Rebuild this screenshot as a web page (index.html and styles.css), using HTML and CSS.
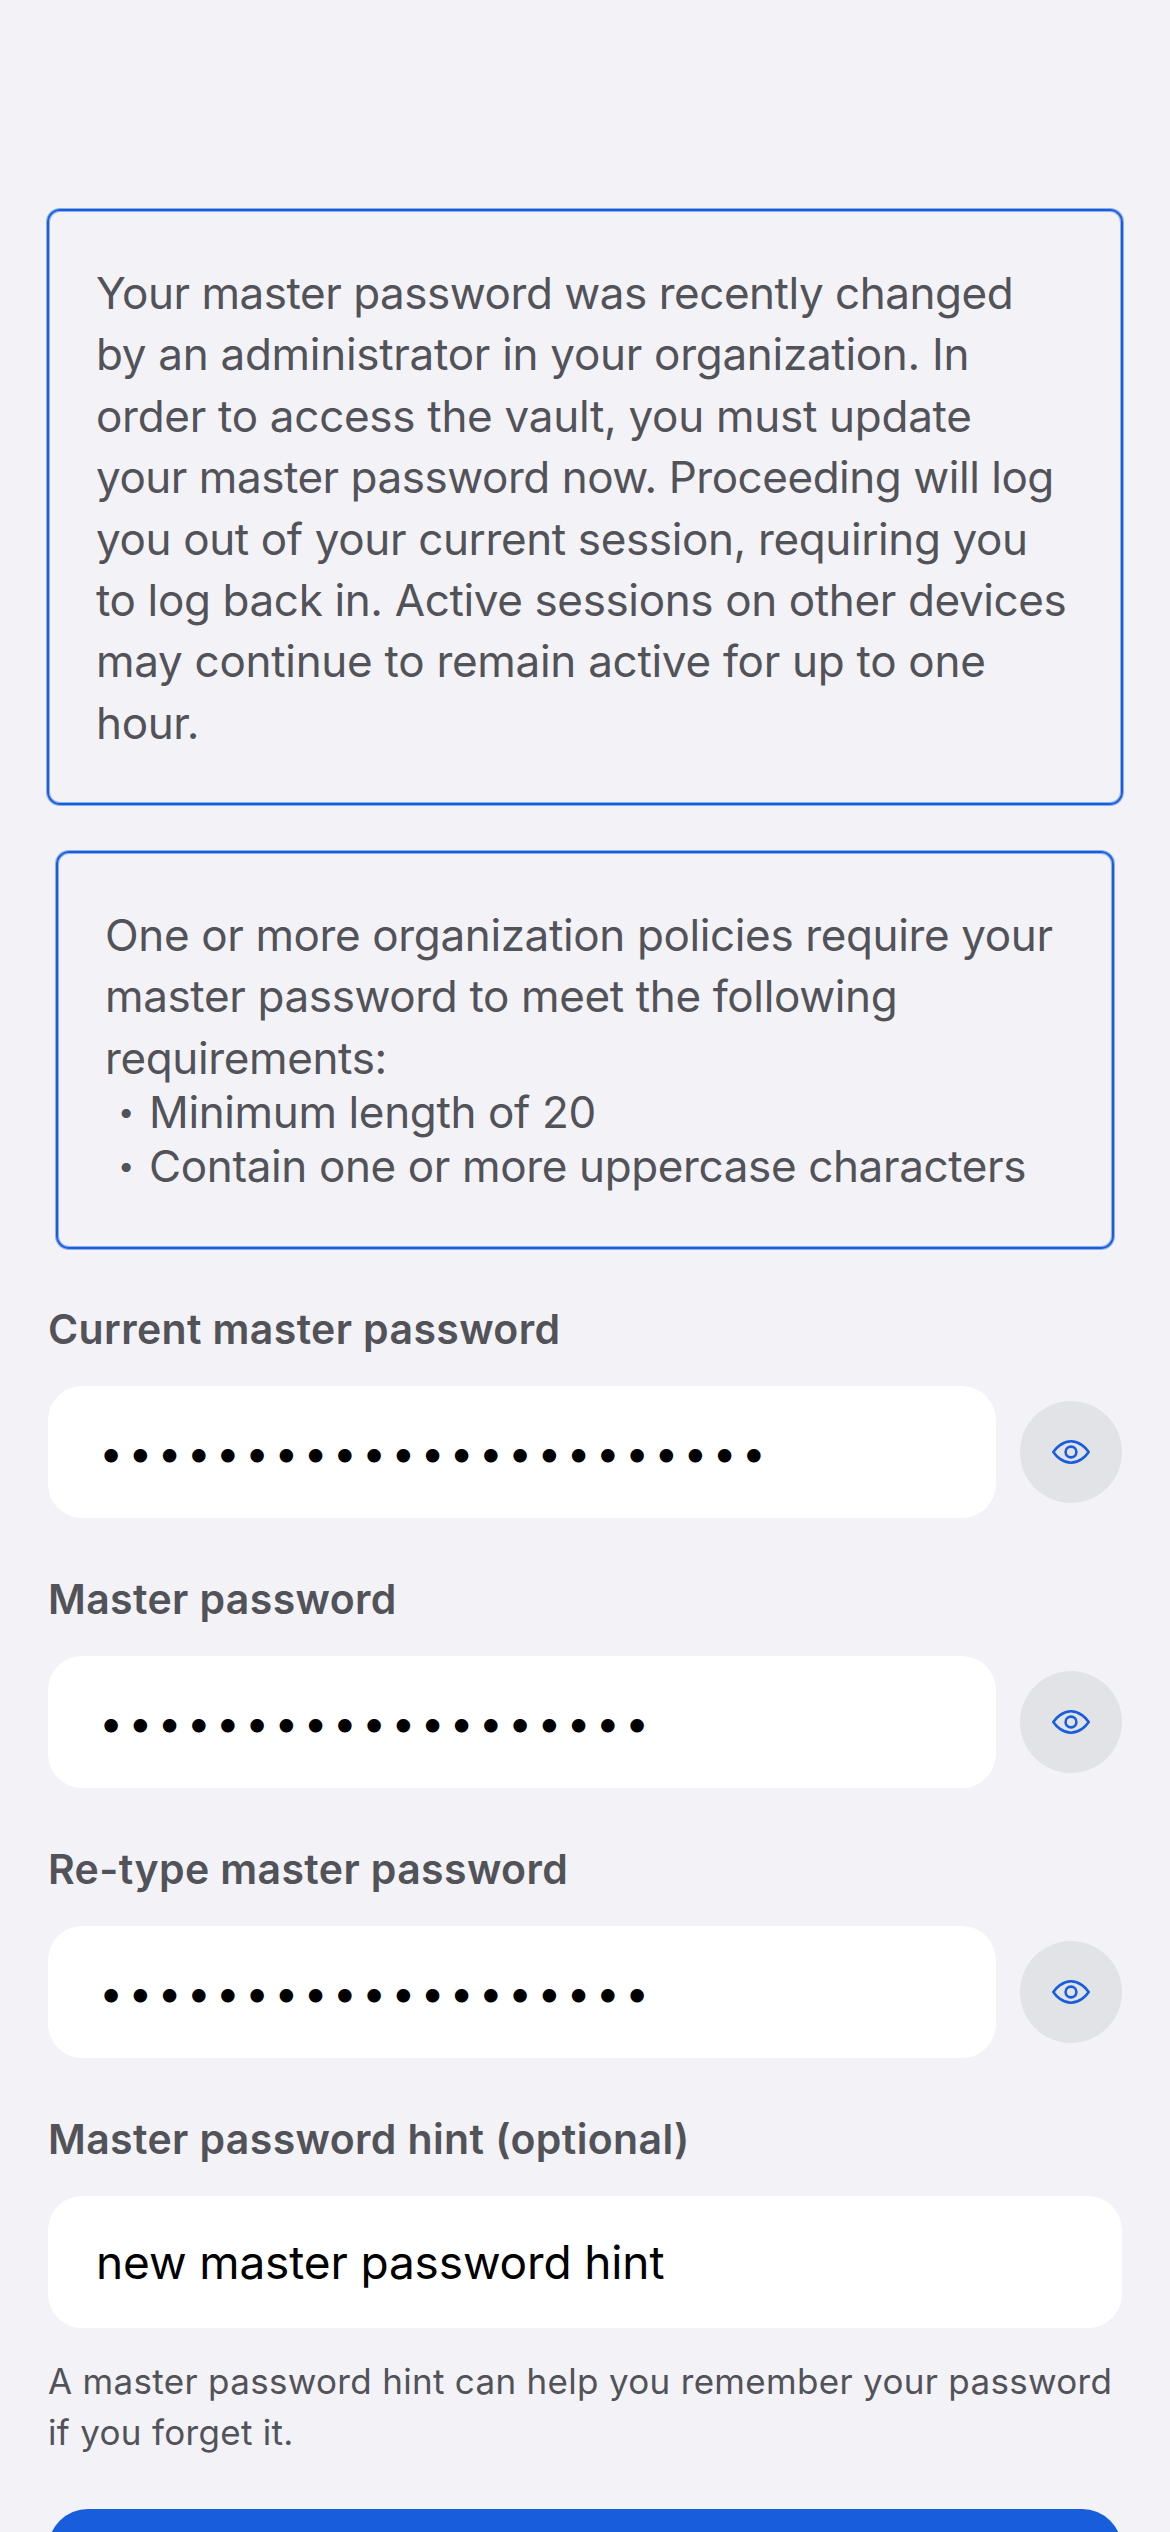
FILE: index.html
```
<!DOCTYPE html>
<html lang="en">
<head>
<meta charset="utf-8">
<title>Update master password</title>
<link rel="stylesheet" href="styles.css">
</head>
<body>
<svg class="symbols" width="0" height="0" aria-hidden="true">
  <symbol id="eye" viewBox="0 0 40 26">
    <path d="M2.3 13C5 9 11.6 2.3 20 2.3S35 9 37.7 13C35 17 28.4 23.7 20 23.7S5 17 2.3 13Z"/>
    <circle cx="20" cy="13" r="5.4"/>
  </symbol>
</svg>
<main class="screen">
  <section class="notice">
    <p class="notice-text"><span class="tight">Your master password was recently changed</span><br><span class="loose">by an administrator in your organization. In</span><br><span class="loose">order to access the vault, you must update</span><br><span class="tight">your master password now. Proceeding will log</span><br>you out of your current session, requiring you<br>to log back in. Active sessions on other devices<br><span class="loose">may continue to remain active for up to one</span><br>hour.</p>
  </section>

  <section class="notice policy">
    <p class="notice-text">One or more organization policies require your<br>master password to meet the following<br>requirements:</p>
    <ul class="rules">
      <li><span class="bullet">•</span><span>Minimum length of 20</span></li>
      <li><span class="bullet">•</span><span>Contain one or more uppercase characters</span></li>
    </ul>
  </section>

  <form class="form">
    <div class="group">
      <div class="label">Current master password</div>
      <div class="row">
        <div class="field dots">•••••••••••••••••••••••</div>
        <button class="reveal" type="button" aria-label="Show"><svg class="eye"><use href="#eye"/></svg></button>
      </div>
    </div>
    <div class="group">
      <div class="label">Master password</div>
      <div class="row">
        <div class="field dots">•••••••••••••••••••</div>
        <button class="reveal" type="button" aria-label="Show"><svg class="eye"><use href="#eye"/></svg></button>
      </div>
    </div>
    <div class="group">
      <div class="label">Re-type master password</div>
      <div class="row">
        <div class="field dots">•••••••••••••••••••</div>
        <button class="reveal" type="button" aria-label="Show"><svg class="eye"><use href="#eye"/></svg></button>
      </div>
    </div>
    <div class="group">
      <div class="label">Master password hint (optional)</div>
      <div class="row">
        <div class="field hint">new master password hint</div>
      </div>
    </div>
  </form>

  <p class="helper">A master password hint can help you remember your password<br>if you forget it.</p>
  <button class="submit" type="button" aria-label="Submit"></button>
</main>
</body>
</html>
```

FILE: styles.css
```
* {
  box-sizing: border-box;
}

html,
body {
  margin: 0;
  height: 2532px;
  overflow: hidden;
  background: #f2f2f7;
}

body {
  color: #525259;
  font-family: Inter, "Liberation Sans", sans-serif;
  font-kerning: normal;
  white-space: nowrap;
}

p,
ul {
  margin: 0;
  padding: 0;
}

button {
  border: 0;
  padding: 0;
}

.symbols {
  display: block;
}

.screen {
  display: flex;
  flex-direction: column;
  height: 2532px;
  padding: 209px 48px 0;
  overflow: hidden;
}

.screen > * {
  flex: none;
}

/* 2px line with a half-strength pixel on either side */
.notice {
  height: 596px;
  margin: 0 -1px;
  padding: 52px 47px 0;
  border: 2px solid #175ddc;
  border-radius: 13px;
  box-shadow: 0 0 0 1px rgba(23, 93, 220, 0.45), inset 0 0 0 1px rgba(23, 93, 220, 0.45);
  font-size: 44px;
  letter-spacing: -0.37px;
}

.notice-text {
  line-height: 61.4px;
}

.tight {
  letter-spacing: -0.47px;
}

.loose {
  letter-spacing: -0.29px;
}

.policy {
  height: 398px;
  margin: 46px 8px 0;
}

.rules {
  margin-top: -4px;
  list-style: none;
  line-height: 54px;
}

.rules li {
  display: flex;
}

.bullet {
  width: 44px;
  padding-left: 13px;
  font-size: 29px;
}

.form {
  display: flex;
  flex-direction: column;
  gap: 56px;
  margin-top: 55px;
}

.group {
  display: flex;
  flex-direction: column;
  gap: 32px;
}

.label {
  font-size: 41px;
  font-weight: 600;
  line-height: 50px;
  letter-spacing: 0.38px;
}

.row {
  display: flex;
  align-items: center;
  gap: 24px;
}

.field {
  flex: 1;
  height: 132px;
  border-radius: 34px;
  background: #fff;
  color: #000;
  line-height: 132px;
}

.dots {
  padding-left: 51px;
  font-size: 43px;
  letter-spacing: 5.03px;
}

.hint {
  padding: 0 0 0 48px;
  font-size: 46px;
  letter-spacing: -0.13px;
}

.reveal {
  display: flex;
  align-items: center;
  justify-content: center;
  width: 102px;
  height: 102px;
  border-radius: 50%;
  background: #e2e3e7;
}

.eye {
  width: 40px;
  height: 26px;
  fill: none;
  stroke: #175ddc;
  stroke-width: 2.6px;
  stroke-linejoin: round;
}

.helper {
  margin-top: 28px;
  font-size: 35px;
  line-height: 51.4px;
  letter-spacing: 0.31px;
}

.submit {
  height: 150px;
  margin-top: 50px;
  border-radius: 40px;
  background: #175ddc;
}
```
